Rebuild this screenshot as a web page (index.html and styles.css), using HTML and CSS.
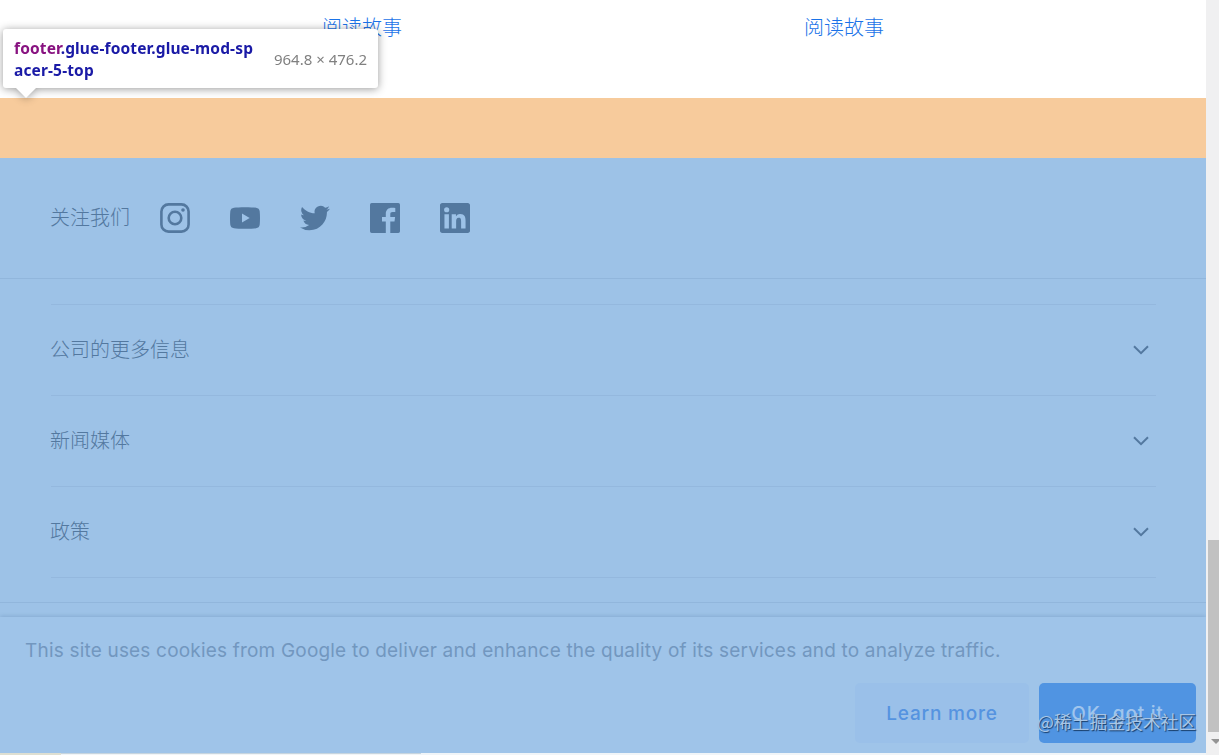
FILE: index.html
```
<!DOCTYPE html>
<html lang="zh-CN">

<head>
    <meta charset="UTF-8">
    <meta name="viewport" content="width=device-width, initial-scale=1.0">
    <title>Footer</title>
    <link rel="stylesheet" href="styles.css">
</head>

<body>
    <div class="page">
        <section class="stories">
            <a class="story-link">阅读故事</a>
            <a class="story-link">阅读故事</a>
        </section>

        <footer class="footer">
            <div class="social">
                <span class="social-title">关注我们</span>
                <svg class="social-icon" viewBox="0 0 30 30">
                    <rect x="1.4" y="1.4" width="27.2" height="27.2" rx="7.2" fill="none" stroke="currentColor" stroke-width="2.6" />
                    <circle cx="15" cy="15" r="6.3" fill="none" stroke="currentColor" stroke-width="2.6" />
                    <circle cx="23" cy="7" r="1.8" />
                </svg>
                <svg class="social-icon" viewBox="0 0 30 30">
                    <path fill-rule="evenodd" d="M4 4.8C8 4.1 22 4.1 26 4.8C28.3 5.1 29.4 6.3 29.7 8.3C30.1 12 30.1 18 29.7 21.7C29.4 23.7 28.3 24.9 26 25.2C22 25.9 8 25.9 4 25.2C1.7 24.9.6 23.7.3 21.7C-.1 18-.1 12 .3 8.3C.6 6.3 1.7 5.1 4 4.8ZM12 10.6V19.4L19.7 15Z" />
                </svg>
                <svg class="social-icon" viewBox="0 0 24 24">
                    <path d="M23.95 4.57a10 10 0 0 1-2.82.77 4.96 4.96 0 0 0 2.16-2.72c-.95.55-2 .95-3.13 1.18a4.92 4.92 0 0 0-8.38 4.48C7.69 8.1 4.07 6.13 1.64 3.16a4.92 4.92 0 0 0 1.52 6.57 4.9 4.9 0 0 1-2.23-.61v.06c0 2.39 1.71 4.38 3.95 4.83a5 5 0 0 1-2.21.08 4.94 4.94 0 0 0 4.6 3.42A9.87 9.87 0 0 1 0 19.54a14 14 0 0 0 7.55 2.21c9.05 0 14-7.5 14-13.98 0-.21 0-.42-.02-.63a9.94 9.94 0 0 0 2.46-2.55z" />
                </svg>
                <svg class="social-icon" viewBox="0 0 30 30">
                    <path d="M1.7 0H28.3A1.7 1.7 0 0 1 30 1.7V28.3A1.7 1.7 0 0 1 28.3 30H20.3V18.6H24.5L25.1 14.1H20.3V11.2C20.3 9.8 20.8 9 22.7 9H25.3V4.9C24.6 4.8 23.4 4.7 22 4.7C18.3 4.7 15.8 6.8 15.8 10.7V14.1H12V18.6H15.8V30H1.7A1.7 1.7 0 0 1 0 28.3V1.7A1.7 1.7 0 0 1 1.7 0Z" />
                </svg>
                <svg class="social-icon" viewBox="0 0 24 24">
                    <path d="M20.45 20.45h-3.56v-5.57c0-1.33-.02-3.04-1.85-3.04-1.85 0-2.13 1.45-2.13 2.94v5.67H9.35V9h3.41v1.56h.05a3.74 3.74 0 0 1 3.37-1.85c3.6 0 4.27 2.37 4.27 5.46v6.28zM5.34 7.43a2.06 2.06 0 1 1 0-4.13 2.06 2.06 0 0 1 0 4.13zM7.12 20.45H3.56V9h3.56v11.45zM22.2 0H1.8C.8 0 0 .8 0 1.8v20.4c0 1 .8 1.8 1.8 1.8h20.4c1 0 1.8-.8 1.8-1.8V1.8C24 .8 23.2 0 22.2 0z" />
                </svg>
            </div>

            <div class="links">
                <div class="link-row">
                    <span>公司的更多信息</span>
                    <svg class="chevron" viewBox="0 0 16 10"><path d="M1 1.3L8 8.2L15 1.3" /></svg>
                </div>
                <div class="link-row">
                    <span>新闻媒体</span>
                    <svg class="chevron" viewBox="0 0 16 10"><path d="M1 1.3L8 8.2L15 1.3" /></svg>
                </div>
                <div class="link-row">
                    <span>政策</span>
                    <svg class="chevron" viewBox="0 0 16 10"><path d="M1 1.3L8 8.2L15 1.3" /></svg>
                </div>
            </div>

            <div class="cookie-bar">
                <p class="cookie-text">This site uses cookies from Google to deliver and enhance the quality of its services and to analyze traffic.</p>
                <div class="cookie-buttons">
                    <div class="button learn">Learn more</div>
                    <div class="button ok">OK, got it</div>
                </div>
            </div>
        </footer>
        <div class="bottom-edge">
            <span class="edge-sand"></span>
            <span class="edge-line"></span>
        </div>
    </div>

    <div class="scrollbar">
        <div class="thumb"></div>
        <svg class="arrow" viewBox="0 0 10 5"><path d="M0 0H10L5 5Z" /></svg>
    </div>

    <!-- element inspector tooltip -->
    <div class="tooltip">
        <div class="selector"><span class="tag">footer</span>.glue-footer.glue-mod-sp<br>acer-5-top</div>
        <div class="size">964.8 × 476.2</div>
    </div>

    <div class="watermark">@稀土掘金技术社区</div>
</body>

</html>
```

FILE: styles.css
```
* {
    box-sizing: border-box;
}

body {
    margin: 0;
    width: 1219px;
    height: 755px;
    display: flex;
    overflow: hidden;
    position: relative;
    background-color: #fff;
    font-family: "Noto Sans CJK SC", sans-serif;
    font-size: 20px;
    font-weight: 300;
}

.page {
    width: 1206px;
    display: flex;
    flex-direction: column;
}

.stories {
    height: 98px;
    padding: 12px 0 0 322px;
    display: flex;
    gap: 402px;
}

.story-link {
    color: #1a73e8;
    line-height: 30px;
    white-space: nowrap;
}

.footer {
    height: 655px;
    border-top: 60px solid #f7cb9c;
    background-color: #9dc2e7;
    color: #53789f;
    display: flex;
    flex-direction: column;
}

.social {
    height: 121px;
    padding-left: 50px;
    border-bottom: 1px solid #91b6dc;
    display: flex;
    align-items: center;
    gap: 40px;
}

.social-title {
    margin-right: -10px;
    padding-bottom: 2px;
    line-height: 30px;
}

.social-icon {
    width: 30px;
    height: 30px;
    fill: currentColor;
}

.links {
    height: 324px;
    padding: 25px 50px 0 51px;
    border-bottom: 1px solid #91b6dc;
}

.link-row {
    height: 91px;
    display: flex;
    align-items: center;
    justify-content: space-between;
    padding-right: 7px;
    border-top: 1px solid #94b8de;
}

.link-row:last-child {
    height: 92px;
    border-bottom: 1px solid #94b8de;
}

.link-row span {
    margin-left: -1px;
    padding-bottom: 4px;
}

.chevron {
    width: 16px;
    height: 10px;
    fill: none;
    stroke: #53789f;
    stroke-width: 2;
}

.cookie-bar {
    margin-top: 14px;
    height: 136px;
    padding: 19px 10px 0 25px;
    background-color: #9fc4e9;
    box-shadow: 0 -1px 4px #86abd2;
    clip-path: inset(-5px 0 0 0);
    font-family: Inter, sans-serif;
    font-weight: 400;
}

.cookie-text {
    margin: 0;
    font-size: 19px;
    line-height: 30px;
    letter-spacing: 0.19px;
    color: #7297bf;
    white-space: nowrap;
}

.cookie-buttons {
    display: flex;
    justify-content: flex-end;
    gap: 10px;
    margin-top: 17px;
}

.button {
    height: 60px;
    border-radius: 5px;
    font-size: 19px;
    line-height: 61px;
    text-align: center;
    font-weight: 500;
    letter-spacing: 0.8px;
}

.learn {
    width: 174px;
    color: #5593e0;
    background-color: #9ac0e9;
}

.ok {
    width: 157px;
    color: #a0c5ed;
    background-color: #5094e2;
}

.bottom-edge {
    height: 2px;
    display: flex;
    background-color: #f1f5f8;
}

.edge-sand {
    width: 61px;
    background-color: #dedfd2;
}

.edge-line {
    width: 360px;
    border-top: 1px solid #c7d5df;
}

.scrollbar {
    width: 13px;
    padding: 540px 0 0 2px;
    background-color: #f0f0f1;
    overflow: hidden;
}

.thumb {
    height: 192px;
    background-color: #c1c1c1;
}

.arrow {
    display: block;
    width: 10px;
    height: 5px;
    margin: 7px 0 0 3px;
    fill: #949494;
}

.tooltip {
    position: absolute;
    left: 3px;
    top: 29px;
    width: 375px;
    height: 59px;
    padding: 8px 11px;
    display: flex;
    justify-content: space-between;
    background-color: #fff;
    border-radius: 3px;
    filter: drop-shadow(0 1px 4px rgba(0, 0, 0, 0.4));
    font-family: "Noto Sans", sans-serif;
    font-size: 15px;
    line-height: 22px;
    white-space: nowrap;
}

.tooltip::after {
    content: "";
    position: absolute;
    left: 13px;
    top: 59px;
    border: 10px solid transparent;
    border-top-color: #fff;
    border-bottom: 0;
}

.selector {
    color: #1a1aa6;
    font-size: 15.5px;
    font-weight: 700;
    letter-spacing: 0.14px;
}

.tag {
    color: #881280;
}

.size {
    align-self: center;
    color: #808080;
    font-weight: 400;
}

.watermark {
    position: absolute;
    left: 1037px;
    top: 707px;
    font-size: 17.8px;
    font-weight: 400;
    line-height: 28px;
    white-space: nowrap;
    color: #a9c6e5;
    text-shadow: 1px 1px 1px #163b66;
}
```
